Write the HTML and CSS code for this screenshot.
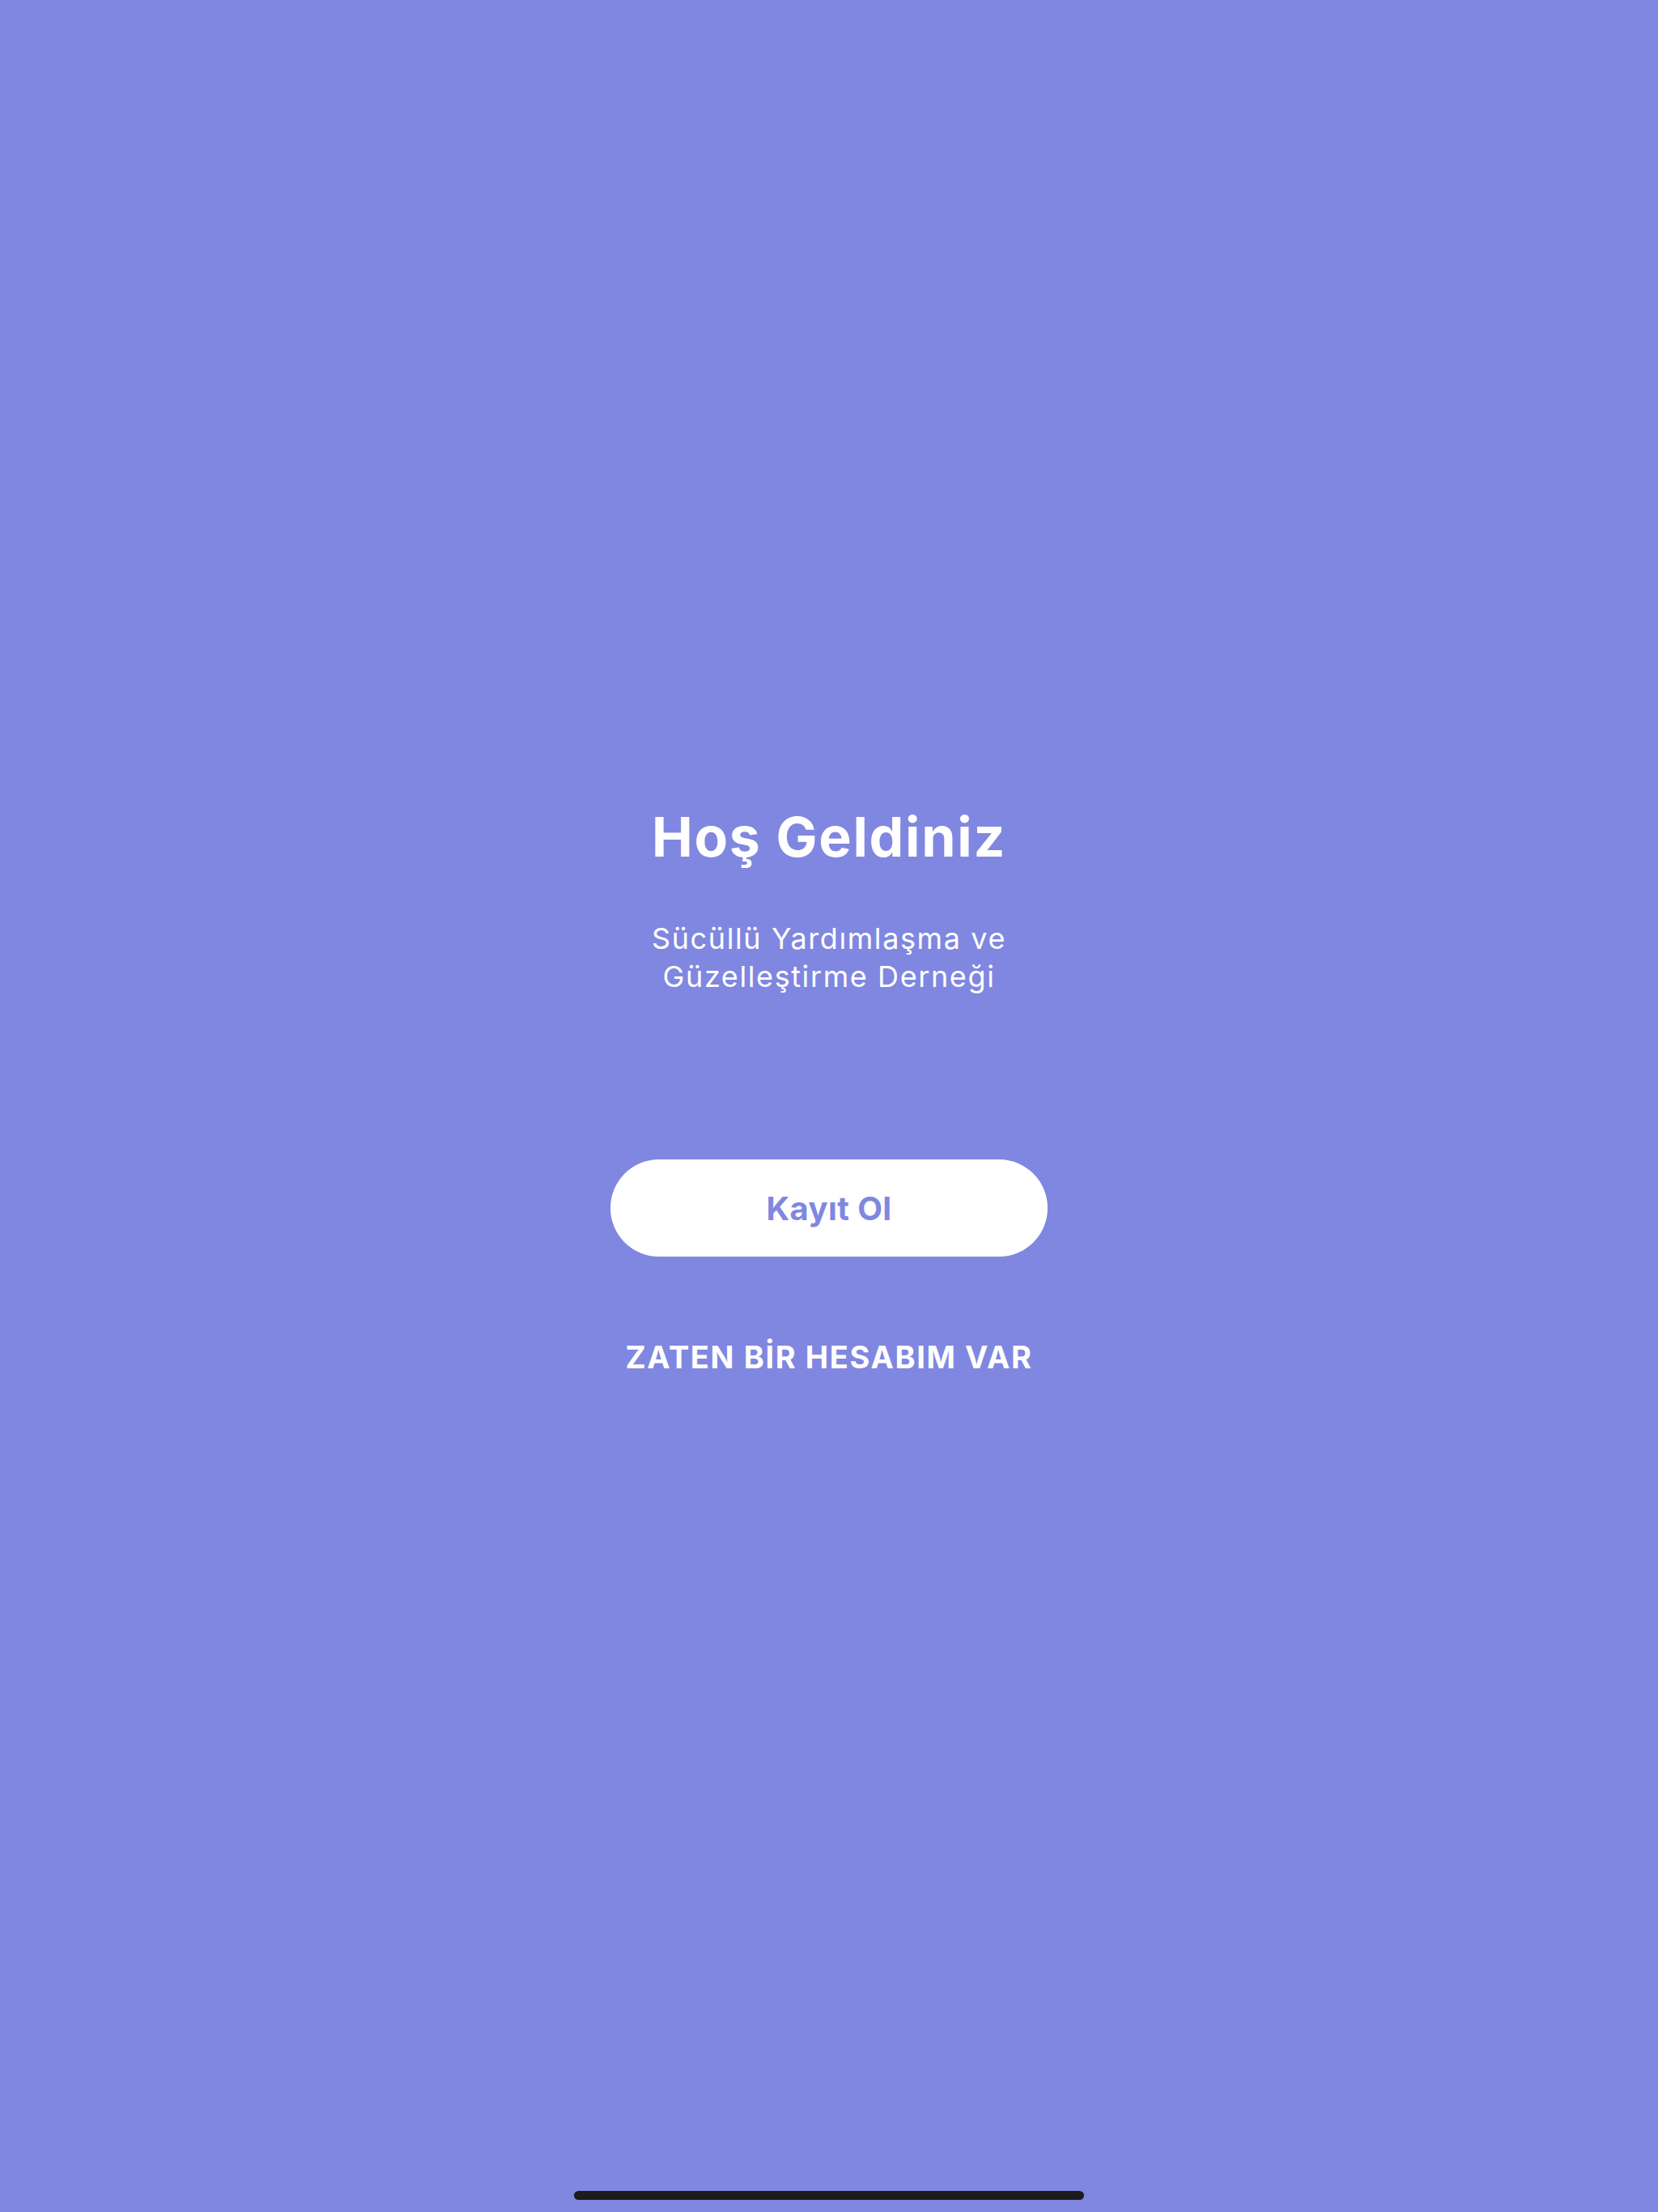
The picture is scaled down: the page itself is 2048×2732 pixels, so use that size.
FILE: index.html
```html
<!DOCTYPE html>
<html lang="tr">
<head>
<meta charset="utf-8">
<title>Hoş Geldiniz</title>
<link rel="stylesheet" href="styles.css">
</head>
<body>
<main class="screen">
  <section class="welcome">
    <h1 class="title">Hoş Geldiniz</h1>
    <p class="subtitle">Sücüllü Yardımlaşma ve<br>Güzelleştirme Derneği</p>
    <button class="btn-register" type="button">Kayıt Ol</button>
    <button class="btn-login" type="button">ZATEN BİR HESABIM VAR</button>
  </section>
  <div class="home-indicator"></div>
</main>
</body>
</html>
```

FILE: styles.css
```css
html, body {
  margin: 0;
  padding: 0;
}

body {
  background: #8087e0;
  font-family: Inter, "Noto Sans", "Liberation Sans", sans-serif;
  color: #ffffff;
}

.screen {
  position: relative;
  width: 2048px;
  height: 2732px;
  background: #8087e0;
  overflow: hidden;
}

.welcome {
  display: flex;
  flex-direction: column;
  align-items: center;
  padding-top: 992px;
}

.title {
  margin: 0;
  font-size: 68px;
  line-height: 82px;
  font-weight: 700;
  letter-spacing: 1.7px;
  color: #ffffff;
  text-align: center;
}

.subtitle {
  margin: 62px 0 0;
  font-size: 36px;
  line-height: 47px;
  font-weight: 400;
  letter-spacing: 1.6px;
  text-align: center;
  color: #ffffff;
}

.btn-register {
  margin-top: 202px;
  width: 540px;
  height: 120px;
  border: none;
  border-radius: 60px;
  background: #ffffff;
  color: #8087e0;
  font-family: inherit;
  font-size: 40px;
  font-weight: 700;
  letter-spacing: 0.4px;
  display: flex;
  align-items: center;
  justify-content: center;
  padding: 0;
}

.btn-login {
  margin-top: 101px;
  border: none;
  background: transparent;
  color: #ffffff;
  font-family: inherit;
  font-size: 38px;
  line-height: 46px;
  font-weight: 700;
  letter-spacing: 1.6px;
  padding: 0;
}

.home-indicator {
  position: absolute;
  left: 709px;
  top: 2706px;
  width: 630px;
  height: 11px;
  border-radius: 6px;
  background: #1c1c1c;
}
```
